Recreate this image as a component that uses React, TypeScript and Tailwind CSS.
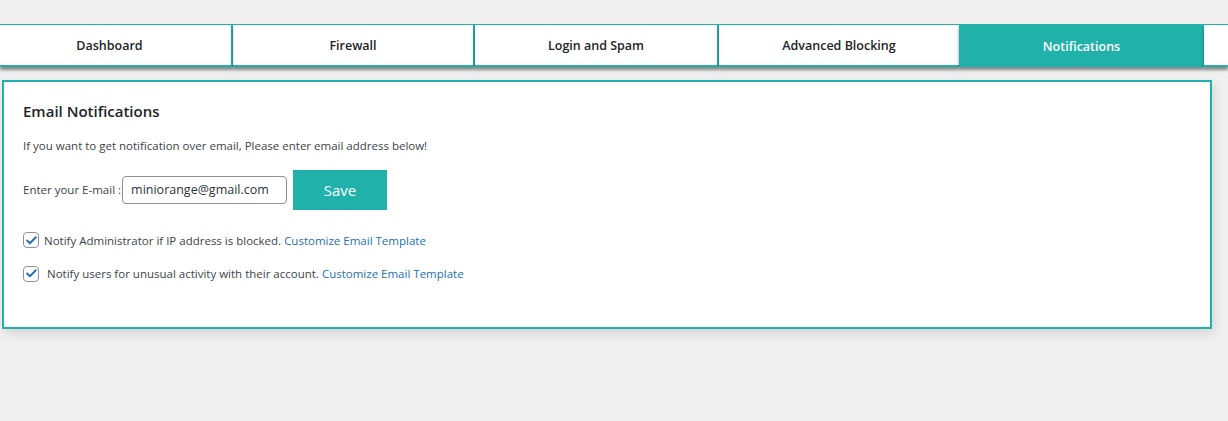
import { Check } from 'lucide-react'

const tabs = [
  { label: 'Dashboard', w: 'w-[233px] pr-[12px] border-r-2' },
  { label: 'Firewall', w: 'w-[242px] border-r-2' },
  { label: 'Login and Spam', w: 'w-[244px] border-r-2' },
  { label: 'Advanced Blocking', w: 'w-[240px]' },
]

function Notify({ text, indent }: { text: string; indent?: boolean }) {
  return (
    <label className="flex items-center text-[11.5px] text-[#3c434a]">
      <span className="flex h-4 w-4 items-center justify-center rounded-[4px] border border-[#8c8f94] bg-white">
        <Check size={13} strokeWidth={3.5} className="text-[#2271b1]" />
      </span>
      <span className={indent ? 'ml-[8px]' : 'ml-[5px]'}>
        {text} <a className="text-[#2271b1]">Customize Email Template</a>
      </span>
    </label>
  )
}

export default function App() {
  return (
    <div className="min-h-[421px] bg-[#f0f0f1] pt-6 font-['Open_Sans',sans-serif]">
      <div className="flex h-[43px] border-t border-[#20b2aa] bg-white">
        {tabs.map((t) => (
          <div
            key={t.label}
            className={`${t.w} flex items-center justify-center border-b-2 border-[#20b2aa] bg-white pt-[2px] text-[12.5px] font-semibold text-[#1d2327] shadow-[0_3px_3px_rgba(0,0,0,0.45)]`}
          >
            {t.label}
          </div>
        ))}
        <div className="-mt-px flex w-[245px] items-center justify-center bg-[#20b2aa] pt-[3px] text-[12.5px] font-semibold text-white shadow-[0_3px_3px_rgba(0,0,0,0.45)]">
          Notifications
        </div>
        <div className="flex-1 border-b-2 border-[#20b2aa] bg-white shadow-[0_3px_3px_rgba(0,0,0,0.45)]" />
      </div>

      <div className="mt-[13px] ml-[2px] w-[1210px] border-2 border-[#20b2aa] bg-white px-[19px] pt-[18px] pb-[45px] shadow-[2px_4px_10px_rgba(0,0,0,0.12)]">
        <h2 className="text-[15px] font-semibold text-[#1d2327]">Email Notifications</h2>
        <p className="mt-[14px] text-[11.5px] text-[#3c434a]">
          If you want to get notification over email, Please enter email address below!
        </p>
        <div className="mt-[16px] flex items-center text-[11.5px] text-[#3c434a]">
          <span>Enter your E-mail :</span>
          <input
            defaultValue="miniorange@gmail.com"
            className="ml-px h-[28px] w-[165px] rounded-[4px] border border-[#8c8f94] px-2 text-[12.5px] text-[#2c3338] outline-none"
          />
          <button className="ml-[6px] h-[40px] w-[94px] bg-[#20b2aa] text-[15px] text-white">Save</button>
        </div>
        <div className="mt-[22px] flex flex-col gap-[16px]">
          <Notify text="Notify Administrator if IP address is blocked." />
          <Notify text="Notify users for unusual activity with their account." indent />
        </div>
      </div>
    </div>
  )
}
